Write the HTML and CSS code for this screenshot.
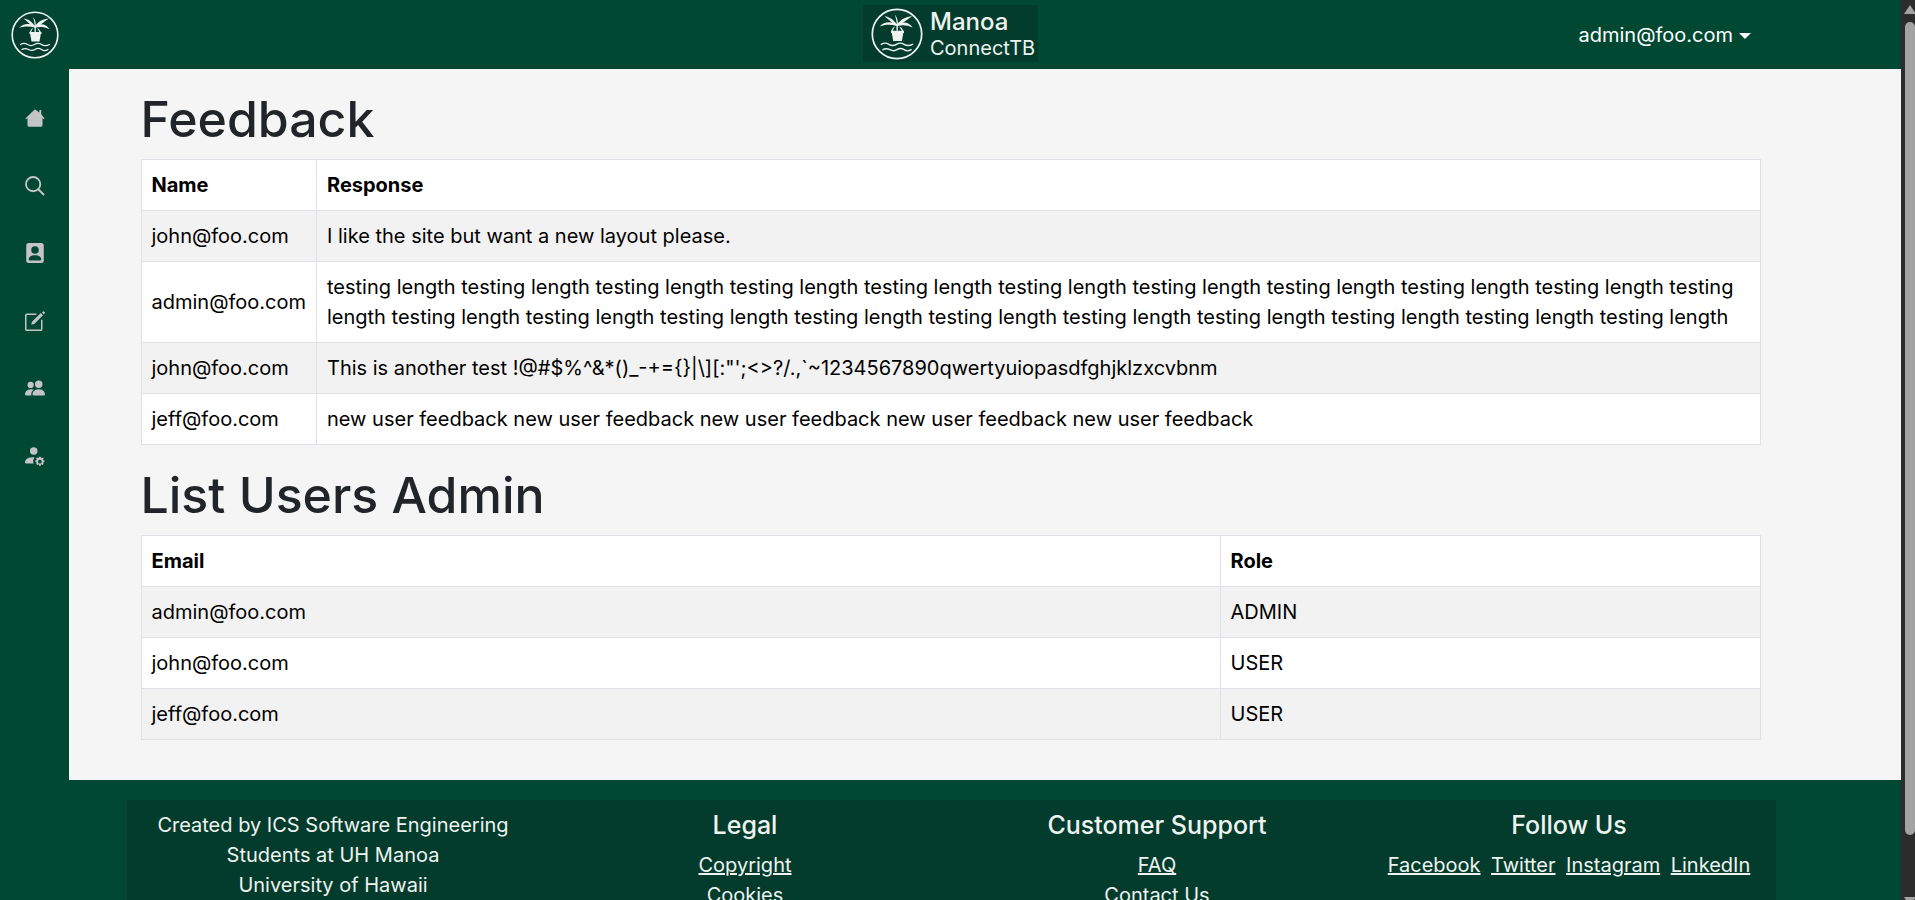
FILE: index.html
```html
<!DOCTYPE html>
<html lang="en">

<head>
    <meta charset="UTF-8">
    <meta name="viewport" content="width=device-width, initial-scale=1.0">
    <title>Manoa ConnectTB</title>
    <link rel="stylesheet" href="styles.css">
</head>

<body>
    <svg class="icon-defs" width="0" height="0">
        <symbol id="palm" viewBox="0 0 48 48">
            <circle cx="24" cy="24" r="22.8" fill="#033c2d" stroke="#eef3ef" stroke-width="1.6" />
            <g fill="#eef3ef">
                <path d="M24 15C20 10 17 8 12.500 7.500C16 10 19 14 24 16.500Z" />
                <path d="M24 15C28 10 32 8 38 7.500C34 10 30 14 24 16.500Z" />
                <path d="M24 15C18 12 12 12.500 8 17C13 15 18 15 24 16.500Z" />
                <path d="M24 15C30 12 35 13 38.500 18C33 15.500 29 15.500 24 16.500Z" />
                <path d="M24 16C23.500 12 23 9 22 6C24.500 9 25 12 24.800 16Z" />
                <path d="M18.500 21.500C19.300 19.500 20 18.500 21 17.500L22 17L19.800 21.500Z" />
                <path d="M30 21.500C29.300 19.500 28.500 18.500 27 17.500L26 17L28.700 21.500Z" />
                <path d="M23.500 15.500H24.800V21H23.500Z" />
                <path d="M18.500 21H30.500V23H29.800L28.500 30.500H20.500L19.200 23H18.500Z" />
            </g>
            <path fill="none" stroke="#eef3ef" stroke-width="1.300" stroke-linecap="round" d="M9.500 33.500c2.500-1.500 4.500-1.500 7 0s4.500 1.500 7 0 4.500-1.500 7 0 5 1.500 8 0M11 38.500c2-1.300 4-1.300 6.500 0s4.500 1.300 6.500 0 4.500-1.300 6.500 0 4.500 1.300 6.500 0" />
        </symbol>
    </svg>

    <nav class="topbar">
        <div class="topbar-left">
            <svg class="logo-round"><use href="#palm" /></svg>
        </div>
        <div class="brand">
            <svg class="brand-logo"><use href="#palm" /></svg>
            <div class="brand-text">
                <span class="brand-name">Manoa</span>
                <span class="brand-sub">ConnectTB</span>
            </div>
        </div>
        <div class="topbar-right">
            <a class="user-menu">admin@foo.com<span class="caret"></span></a>
        </div>
    </nav>

    <div class="layout">
        <aside class="sidebar">
            <svg class="side-icon" viewBox="0 0 16 16"><path d="M8.700 1.500a1 1 0 0 0-1.400 0L.3 8.300l.6.6L2 7.900V13.500A1.500 1.500 0 0 0 3.500 15h9a1.500 1.500 0 0 0 1.500-1.500V7.900l1.100 1 .6-.6L13 5V1.500h-1.500v2z" /></svg>
            <svg class="side-icon search-icon" viewBox="0 0 16 16"><circle cx="6.500" cy="6.500" r="5.700" /><path d="M10.800 10.800L14.800 14.800" /></svg>
            <svg class="side-icon" viewBox="0 0 16 16"><path fill-rule="evenodd" d="M3 0h10a2 2 0 0 1 2 2v12a2 2 0 0 1-2 2H3a2 2 0 0 1-2-2V2a2 2 0 0 1 2-2m5 8.500a3 3 0 1 0 0-6 3 3 0 0 0 0 6M3 13c0 .6.5 1 1 1h8c.5 0 1-.4 1-1 0-1.500-1.500-3.200-5-3.200S3 11.500 3 13" /></svg>
            <svg class="side-icon" viewBox="0 0 16 16"><path d="M15.200.3a.5.5 0 0 0-.7 0l-.9.9 1.400 1.400.9-.9a.5.5 0 0 0 0-.7zM14.400 3.400L12.600 1.600l-7 7L5 11l2.400-.6z" /><path fill-rule="evenodd" d="M1.500 2A1.500 1.500 0 0 0 0 3.500v11A1.500 1.500 0 0 0 1.500 16h11a1.500 1.500 0 0 0 1.500-1.500V7h-1.200v7.300a.5.5 0 0 1-.5.5H1.700a.5.5 0 0 1-.5-.5V3.700a.5.5 0 0 1 .5-.5H9V2z" /></svg>
            <svg class="side-icon" viewBox="0 0 16 16"><path d="M7 14s-1 0-1-1 1-4 5-4 5 3 5 4-1 1-1 1zm4-6a3 3 0 1 0 0-6 3 3 0 0 0 0 6m-5.800 6A2.200 2.200 0 0 1 5 13c0-1.400.7-2.800 2-3.700A6.500 6.500 0 0 0 5 9c-4 0-5 3-5 4s1 1 1 1zM4.500 8a2.500 2.500 0 1 0 0-5 2.500 2.500 0 0 0 0 5" /></svg>
            <svg class="side-icon" viewBox="0 0 16 16"><path d="M7 7a3 3 0 1 0 0-6 3 3 0 0 0 0 6M1 14s-1 0-1-1 1-4 6-4c.6 0 1.200 0 1.700.1A4.500 4.500 0 0 0 7 14z" /><path fill-rule="evenodd" d="M12.500 8.500l.4 1.100 1.100-.5.9.9-.5 1.100 1.100.4v1.200l-1.100.4.5 1.100-.9.9-1.100-.5-.4 1.100h-1.200l-.4-1.100-1.100.5-.9-.9.5-1.100-1.100-.4v-1.200l1.100-.4-.5-1.100.9-.9 1.100.5.4-1.100zM11.900 11a1.500 1.500 0 1 0 0 3 1.500 1.500 0 0 0 0-3" /></svg>
        </aside>

        <div class="page">
            <main class="content">
                <h1>Feedback</h1>
                <table>
                    <tr>
                        <th class="col-name">Name</th>
                        <th>Response</th>
                    </tr>
                    <tr>
                        <td>john@foo.com</td>
                        <td>I like the site but want a new layout please.</td>
                    </tr>
                    <tr>
                        <td>admin@foo.com</td>
                        <td>testing length testing length testing length testing length testing length testing length testing length testing length testing length testing length testing length testing length testing length testing length testing length testing length testing length testing length testing length testing length testing length</td>
                    </tr>
                    <tr>
                        <td>john@foo.com</td>
                        <td>This is another test !@#$%^&amp;*()_-+={}|\][:"';&lt;&gt;?/.,`~1234567890qwertyuiopasdfghjklzxcvbnm</td>
                    </tr>
                    <tr>
                        <td>jeff@foo.com</td>
                        <td>new user feedback new user feedback new user feedback new user feedback new user feedback</td>
                    </tr>
                </table>

                <h1>List Users Admin</h1>
                <table>
                    <tr>
                        <th>Email</th>
                        <th class="col-role">Role</th>
                    </tr>
                    <tr>
                        <td>admin@foo.com</td>
                        <td>ADMIN</td>
                    </tr>
                    <tr>
                        <td>john@foo.com</td>
                        <td>USER</td>
                    </tr>
                    <tr>
                        <td>jeff@foo.com</td>
                        <td>USER</td>
                    </tr>
                </table>
            </main>

            <footer class="footer">
                <div class="footer-inner">
                    <div class="footer-col">
                        <p>Created by ICS Software Engineering</p>
                        <p>Students at UH Manoa</p>
                        <p>University of Hawaii</p>
                    </div>
                    <div class="footer-col">
                        <h5>Legal</h5>
                        <a href="#">Copyright</a>
                        <a href="#" class="plain">Cookies</a>
                    </div>
                    <div class="footer-col">
                        <h5>Customer Support</h5>
                        <a href="#">FAQ</a>
                        <a href="#" class="plain">Contact Us</a>
                    </div>
                    <div class="footer-col">
                        <h5>Follow Us</h5>
                        <div class="social">
                            <a href="#">Facebook</a>
                            <a href="#">Twitter</a>
                            <a href="#">Instagram</a>
                            <a href="#">LinkedIn</a>
                        </div>
                    </div>
                </div>
            </footer>
        </div>
    </div>

    <div class="scrollbar">
        <span class="arrow-up"></span>
        <span class="thumb"></span>
        <span class="arrow-down"></span>
    </div>
</body>

</html>
```

FILE: styles.css
```css
html,
body {
    margin: 0;
    height: 900px;
    overflow: hidden;
}

body {
    background-color: #004831;
    font-family: Inter, "Liberation Sans", sans-serif;
    font-size: 20px;
    line-height: 30px;
    color: #000;
}

.icon-defs {
    position: absolute;
}

.topbar {
    display: grid;
    grid-template-columns: 1fr auto 1fr;
    align-items: center;
    height: 69px;
    padding-right: 14px;
}

.topbar-left {
    display: flex;
    width: 69px;
    justify-content: center;
}

.logo-round {
    width: 48px;
    height: 48px;
}

.brand {
    display: flex;
    align-items: center;
    gap: 7px;
    width: 175px;
    height: 57px;
    box-sizing: border-box;
    padding-left: 8px;
    margin-bottom: 2px;
    background-color: #033c2d;
}

.brand-logo {
    width: 52px;
    height: 52px;
}

.brand-text {
    display: flex;
    flex-direction: column;
    color: #eef3ef;
}

.brand-name {
    font-size: 24px;
    font-weight: 500;
    line-height: 29px;
}

.brand-sub {
    font-size: 20px;
    line-height: 24px;
}

.topbar-right {
    display: flex;
    justify-content: flex-end;
    padding-right: 150px;
}

.user-menu {
    color: #fff;
}

.caret {
    display: inline-block;
    margin-left: 6px;
    vertical-align: 3px;
    border-top: 6px solid #fff;
    border-left: 6px solid transparent;
    border-right: 6px solid transparent;
}

.layout {
    display: flex;
}

.sidebar {
    width: 69px;
    flex: none;
    display: flex;
    flex-direction: column;
    align-items: center;
    gap: 47.6px;
    padding-top: 39px;
}

.side-icon {
    width: 20px;
    height: 20px;
    fill: #c4c4c4;
}

.search-icon {
    fill: none;
    stroke: #c4c4c4;
    stroke-width: 1.5;
    stroke-linecap: round;
}

.page {
    flex: 1;
    margin-right: 14px;
}

.content {
    height: 711px;
    box-sizing: border-box;
    padding: 20px 140.5px 0 71.5px;
    background-color: #f5f5f5;
}

h1 {
    margin: 0 0 10px;
    font-size: 50px;
    font-weight: 450;
    line-height: 60px;
    color: #212529;
}

table {
    width: 100%;
    border-collapse: collapse;
    background-color: #fff;
    margin-bottom: 20px;
}

th,
td {
    border: 1px solid #dee2e6;
    padding: 10px;
    text-align: left;
}

th {
    font-weight: 700;
}

tr:nth-child(even) td {
    background-color: #f2f2f2;
}

.col-name {
    width: 154px;
}

.col-role {
    width: 519px;
}

.footer {
    padding: 20px 125px 0 58px;
    color: #eef3ef;
}

.footer-inner {
    display: grid;
    grid-template-columns: repeat(4, 1fr);
    background-color: #033c2d;
    padding: 10px 1px 0 0;
    text-align: center;
}

.footer-col p {
    margin: 0;
}

.footer-col h5 {
    margin: 0 0 10px;
    font-size: 25px;
    font-weight: 500;
    line-height: 30px;
}

.footer-col a {
    display: block;
    color: #eef3ef;
}

.footer-col a.plain {
    text-decoration: none;
}

.social {
    display: flex;
    justify-content: center;
    gap: 10.5px;
}

.scrollbar {
    position: fixed;
    top: 0;
    right: 0;
    bottom: 0;
    width: 14px;
    background-color: #2c2c2c;
}

.arrow-up {
    position: absolute;
    top: 5px;
    right: -1px;
    border-bottom: 9px solid #a3a3a3;
    border-left: 6px solid transparent;
    border-right: 6px solid transparent;
}

.thumb {
    position: absolute;
    top: 22px;
    left: 4px;
    right: 0;
    height: 813px;
    border-radius: 5px;
    background-color: #a3a3a3;
}

.arrow-down {
    position: absolute;
    bottom: -6px;
    right: -1px;
    border-top: 9px solid #a3a3a3;
    border-left: 6px solid transparent;
    border-right: 6px solid transparent;
}
```
